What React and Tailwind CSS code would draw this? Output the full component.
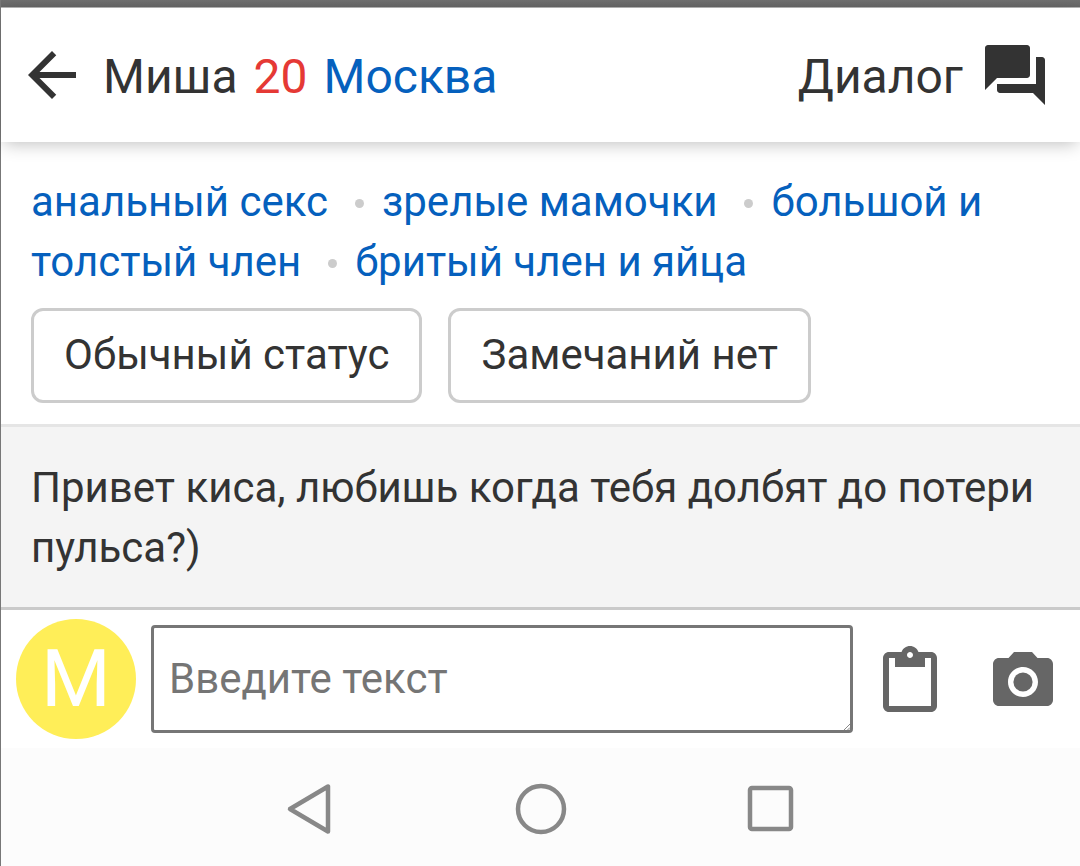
import { useState } from "react";
import { MdArrowBack, MdForum, MdContentPaste, MdPhotoCamera } from "react-icons/md";

const tags = ["анальный секс", "зрелые мамочки", "большой и толстый член", "бритый член и яйца"];

export default function App() {
  const [text, setText] = useState("");

  return (
    <div className="flex min-h-screen flex-col border-l border-[#777] bg-white font-[Roboto,sans-serif] text-[42px] leading-[60px] text-[#333]">
      {/* Status strip */}
      <div className="h-2 border-b border-[#b5b5b5] bg-linear-to-b from-[#6f6f6f] to-[#666]" />

      {/* Header */}
      <header className="relative z-10 flex items-center justify-between bg-white py-[31px] pr-[29px] pl-[15px] text-[48px] leading-[60px] shadow-[0_5px_16px_-3px_rgba(0,0,0,0.25)]">
        <div className="flex items-center gap-[15px]">
          <button aria-label="Назад">
            <MdArrowBack size={72} />
          </button>
          <h1 className="flex gap-4 pt-1">
            Миша
            <span className="text-[#e53935]">20</span>
            <a href="#city" className="text-[#0560bd]">
              Москва
            </a>
          </h1>
        </div>
        <a href="#dialog" className="flex items-center gap-4">
          <span className="pt-1">Диалог</span>
          <MdForum size={72} />
        </a>
      </header>

      {/* Tags and status */}
      <section className="px-[30px] pt-[30px] pb-[21px]">
        <p>
          {tags.map((tag, i) => (
            <span key={tag}>
              {i > 0 && (
                <>
                  {" "}
                  <Dot />{" "}
                </>
              )}
              <a href="#tag" className="text-[#0560bd]">
                {tag}
              </a>
            </span>
          ))}
        </p>
        <div className="mt-4 flex flex-wrap gap-[26px]">
          <StatusButton>Обычный статус</StatusButton>
          <StatusButton>Замечаний нет</StatusButton>
        </div>
      </section>

      {/* Message */}
      <section className="border-t-3 border-b-3 border-t-[#e5e5e5] border-b-[#cacaca] bg-[#f4f4f4] px-[30px] pt-[31px] pb-[29px]">
        <p>Привет киса, любишь когда тебя долбят до потери пульса?)</p>
      </section>

      {/* Composer */}
      <form className="flex items-center py-[9px] pr-[21px] pl-[15px]" onSubmit={(e) => e.preventDefault()}>
        <span className="grid size-[120px] shrink-0 place-items-center rounded-full bg-[#ffee58] text-[80px] text-white">
          M
        </span>
        <div className="relative ml-[15px] flex flex-1">
          <textarea
            aria-label="Введите текст"
            placeholder="Введите текст"
            rows={1}
            value={text}
            onChange={(e) => setText(e.target.value)}
            className="h-[108px] w-full resize-none rounded-[4px] border-3 border-[#767676] px-[15px] py-[21px] outline-none placeholder:text-[#757575]"
          />
          <svg viewBox="0 0 6 6" className="absolute right-[3px] bottom-[3px] size-[6px]" stroke="#888" fill="none">
            <path d="M0 6 6 0M3.5 6 6 3.5" />
          </svg>
        </div>
        <div className="ml-[21px] flex gap-[41px] pt-1.5 text-[#666]">
          <button type="button" aria-label="Вставить">
            <MdContentPaste size={72} />
          </button>
          <button type="button" aria-label="Фото">
            <MdPhotoCamera size={72} />
          </button>
        </div>
      </form>

      {/* System navigation */}
      <nav className="flex flex-1 items-center justify-center gap-[174px] bg-[#fcfcfc] pt-8 pb-[29px]">
        <NavButton label="Назад">
          <path d="M45 5.5v45L7 28z" />
        </NavButton>
        <NavButton label="Домой">
          <circle cx="28" cy="28" r="23" />
        </NavButton>
        <NavButton label="Недавние">
          <rect x="7" y="7" width="41" height="41" rx="2" />
        </NavButton>
      </nav>
    </div>
  );
}

/* ---------- Small UI helpers ---------- */
function Dot() {
  return <span className="mr-2 mb-2 ml-4 inline-block size-[9px] rounded-full bg-[#ccc]" />;
}

function StatusButton({ children }) {
  return <button className="rounded-xl border-3 border-[#ccc] px-[30px] pt-[14px] pb-[15px]">{children}</button>;
}

function NavButton({ label, children }) {
  return (
    <button aria-label={label}>
      <svg
        viewBox="0 0 56 56"
        className="size-14"
        fill="none"
        stroke="#888"
        strokeWidth="4.5"
        strokeLinejoin="round"
      >
        {children}
      </svg>
    </button>
  );
}
